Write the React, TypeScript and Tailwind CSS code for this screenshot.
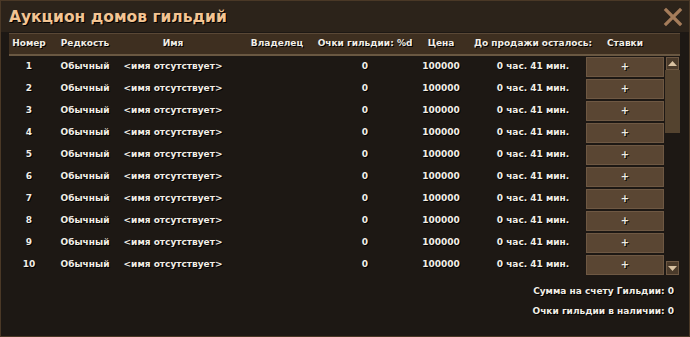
import React from "react";

const cols = [
  "w-[40px]",
  "w-[72px]",
  "w-[104px]",
  "w-[104px]",
  "w-[72px]",
  "w-[80px]",
  "w-[104px]",
  "w-[80px]",
];

const headers = [
  "Номер",
  "Редкость",
  "Имя",
  "Владелец",
  "Очки гильдии: %d",
  "Цена",
  "До продажи осталось:",
  "Ставки",
];

function Cell({ i, children }: { i: number; children?: React.ReactNode }) {
  return (
    <div className={`${cols[i]} shrink-0 flex justify-center items-center whitespace-nowrap`}>
      {children}
    </div>
  );
}

export default function App() {
  const rows = Array.from({ length: 10 }, (_, i) => i + 1);
  return (
    <div
      className="w-[690px] h-[337px] bg-[#1d1814] border border-[#4a3826] flex flex-col text-[#f2eee6] overflow-hidden"
      style={{ fontFamily: '"DejaVu Sans", Verdana, sans-serif' }}
    >
      <div className="h-[31px] shrink-0 bg-[#2c231a] flex items-center justify-between pl-[8px] pr-[6px]">
        <div className="text-[15.5px] font-bold text-[#f3c493] [text-shadow:1px_1px_0_#000] leading-none mt-[3px]">
          Аукцион домов гильдий
        </div>
        <svg width="20" height="20" viewBox="0 0 20 20" className="mt-[1px]">
          <path d="M3 3 L17 17 M17 3 L3 17" stroke="#a57c5a" strokeWidth="3.2" strokeLinecap="square" />
        </svg>
      </div>
      <div className="pl-[8px] pt-[1px]">
        <div className="w-[671px] h-[23px] bg-[#3e2f20] border-t border-b-2 border-t-[#5a4836] border-b-[#6a5842] flex items-center text-[9px] font-bold [text-shadow:1px_1px_0_#000]">
          {headers.map((h, i) => (
            <Cell key={i} i={i}>
              {h}
            </Cell>
          ))}
        </div>
        <div className="flex">
          <div className="flex flex-col text-[9px] font-bold [text-shadow:1px_1px_0_#000]">
            {rows.map((r) => (
              <div key={r} className="h-[22px] flex items-center">
                <Cell i={0}>{r}</Cell>
                <Cell i={1}>Обычный</Cell>
                <Cell i={2}>&lt;имя отсутствует&gt;</Cell>
                <Cell i={3}></Cell>
                <Cell i={4}>0</Cell>
                <Cell i={5}>100000</Cell>
                <Cell i={6}>0 час. 41 мин.</Cell>
                <Cell i={7}>
                  <div className="w-[78px] h-[20px] bg-[#5a4633] border border-[#6e5843] flex items-center justify-center text-[10px] leading-none">
                    +
                  </div>
                </Cell>
              </div>
            ))}
          </div>
          <div className="w-[15px] flex flex-col items-center pt-[1px]">
            <div className="w-[13px] h-[13px] bg-[#4a3a2a] border border-[#6e5843] flex items-center justify-center">
              <svg width="9" height="5" viewBox="0 0 9 5">
                <path d="M0 5 L4.5 0 L9 5 Z" fill="#d9c2a2" />
              </svg>
            </div>
            <div className="w-[15px] h-[63px] bg-[#54432f]" />
            <div className="flex-1" />
            <div className="w-[13px] h-[14px] mb-[1px] bg-[#4a3a2a] border border-[#6e5843] flex items-center justify-center">
              <svg width="9" height="5" viewBox="0 0 9 5">
                <path d="M0 0 L4.5 5 L9 0 Z" fill="#d9c2a2" />
              </svg>
            </div>
          </div>
        </div>
        <div className="flex flex-col items-end pr-[15px] pt-[9px] gap-[6px] text-[9px] font-bold [text-shadow:1px_1px_0_#000]">
          <div>Сумма на счету Гильдии: 0</div>
          <div>Очки гильдии в наличии: 0</div>
        </div>
      </div>
    </div>
  );
}
